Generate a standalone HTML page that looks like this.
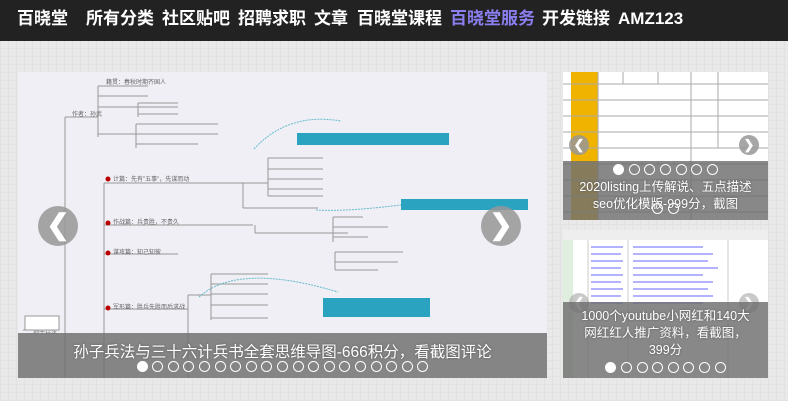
<!DOCTYPE html>
<html><head><meta charset="utf-8"><style>
*{margin:0;padding:0;box-sizing:border-box}
body{width:788px;height:401px;overflow:hidden;background:#e9e9e9;background-image:linear-gradient(#e2e2e2 1px,transparent 1px),linear-gradient(90deg,#e2e2e2 1px,transparent 1px);background-size:8px 8px;font-family:"Liberation Sans","Noto Sans CJK SC",sans-serif;position:relative}
.nav{height:41px;background:#222;color:#fff;font-weight:bold;font-size:17px;white-space:nowrap;position:relative}
.nav span{position:absolute;top:0;line-height:38px;height:41px}
.slide{position:absolute;overflow:hidden}
.cap{position:absolute;left:0;right:0;background:rgba(110,110,110,.82);color:#fff;text-align:center;text-shadow:0 0 2px #555}
.dots{position:absolute;left:0;right:0;text-align:center;font-size:0}
.dots i{display:inline-block;width:11px;height:11px;border:1.5px solid #fff;border-radius:50%;margin:0 2.3px}
.dots i.a{background:#fff}
.arr{position:absolute;border-radius:50%;background:rgba(150,150,150,.85);color:#fff;font-weight:bold;text-align:center}
</style></head><body>
<div class="nav">
<span style="left:17px">百晓堂</span>
<span style="left:86px">所有分类</span>
<span style="left:162px">社区贴吧</span>
<span style="left:238px">招聘求职</span>
<span style="left:314px">文章</span>
<span style="left:357px">百晓堂课程</span>
<span style="left:450px;color:#8b7ff0">百晓堂服务</span>
<span style="left:542px">开发链接</span>
<span style="left:618px">AMZ123</span>
</div>

<div class="slide" style="left:18px;top:72px;width:529px;height:306px;background:#f0eff5">
<svg width="529" height="306" style="position:absolute;left:0;top:0" stroke="#999" fill="none" stroke-width="1">
<path d="M47 45V306M47 45H80M80 14V65M80 14H130M80 24H130M80 35H160M80 62H180M120 31V45M120 31H160M120 42H160M118 52V76M118 52H200M118 62H200M118 72H180M86 111V306M86 111H225M86 153H235M86 182H160M86 237H170M225 111V136M225 111H250M225 136H300M250 86V124M250 86H305M250 97H305M250 107H305M250 117H305M250 124H305M237 153V161M237 161H330M315 145V170M315 145H345M315 155H370M315 165H350M317 180V198M317 180H385M317 190H380M317 198H360M170 223V306M170 223H193M193 202V248M193 202H250M193 212H250M193 222H250M193 233H250M193 246H250M5 258H40"/>
<g fill="#666" stroke="none" font-size="6"><text x="88" y="12">籍贯：春秋时期齐国人</text><text x="54" y="44">作者：孙武</text><text x="95" y="109">计篇：先有"五事"，先谋而动</text><text x="95" y="152">作战篇：兵贵胜，不贵久</text><text x="95" y="182">谋攻篇：知己知彼</text><text x="95" y="237">军形篇：胜兵先胜而后求战</text><text x="15" y="262">孙子兵法</text></g>
<g fill="#b00" stroke="none"><circle cx="90" cy="107" r="2.5"/><circle cx="90" cy="151" r="2.5"/><circle cx="90" cy="181" r="2.5"/><circle cx="90" cy="236" r="2.5"/></g>
<path d="M236 77Q270 40 323 49M298 138Q330 140 390 132M181 225Q220 190 320 220" stroke="#6bc" stroke-dasharray="2 1"/>
<rect x="279" y="61" width="152" height="12" fill="#2aa3c0" stroke="none"/>
<rect x="383" y="127" width="127" height="11" fill="#2aa3c0" stroke="none"/>
<rect x="305" y="226" width="107" height="19" fill="#2aa3c0" stroke="none"/>
<rect x="7" y="244" width="34" height="14" fill="#fff" stroke="#999"/>
</svg>
<div class="arr" style="left:20px;top:134px;width:40px;height:40px;font-size:28px;line-height:38px">&#10094;</div>
<div class="arr" style="left:463px;top:134px;width:40px;height:40px;font-size:28px;line-height:38px">&#10095;</div>
<div class="cap" style="top:261px;height:45px;font-size:15.5px;padding-top:7px">孙子兵法与三十六计兵书全套思维导图-666积分，看截图评论</div>
<div class="dots" style="top:289px;left:0"><i class="a"></i><i></i><i></i><i></i><i></i><i></i><i></i><i></i><i></i><i></i><i></i><i></i><i></i><i></i><i></i><i></i><i></i><i></i><i></i></div>
</div>

<div class="slide" style="left:563px;top:72px;width:205px;height:148px;background:#fff">
<svg width="205" height="148" style="position:absolute" stroke="#aaa" fill="none">
<rect x="8" y="0" width="27" height="148" fill="#f0b400" stroke="none"/>
<path d="M0 12H205M0 28H205M0 44H205M0 60H205M0 76H205M0 92H205M0 108H205M0 124H205M0 140H205M35 0V148M128 0V148M60 0V12M95 0V12M155 0V76"/>
</svg>
<div class="arr" style="left:6px;top:63px;width:20px;height:20px;font-size:13px;line-height:20px">&#10094;</div>
<div class="arr" style="left:176px;top:63px;width:20px;height:20px;font-size:13px;line-height:20px">&#10095;</div>
<div class="cap" style="top:89px;height:59px;font-size:12.5px;line-height:17px;padding-top:18px">2020listing上传解说、五点描述<br>seo优化模版-999分，截图</div>
<div class="dots" style="top:92px"><i class="a"></i><i></i><i></i><i></i><i></i><i></i><i></i></div>
<div class="dots" style="top:131px"><i></i><i></i></div>
</div>

<div class="slide" style="left:563px;top:230px;width:205px;height:148px;background:#fff">
<svg width="205" height="148" style="position:absolute" stroke="#ccc" fill="none">
<rect x="0" y="0" width="205" height="10" fill="#eee" stroke="none"/>
<rect x="0" y="10" width="10" height="138" fill="#e0eee0" stroke="none"/>
<path d="M25 10V148M65 10V148M165 10V148"/>
<g stroke="#66f"><path d="M28 17H60M70 17H140M28 24H58M70 24H150M28 31H60M70 31H145M28 38H58M70 38H155M28 45H60M70 45H140M28 52H58M70 52H150M28 59H60M70 59H145M28 66H58M70 66H150M28 73H60M70 73H140"/></g>
</svg>
<div class="arr" style="left:6px;top:63px;width:20px;height:20px;font-size:13px;line-height:20px;opacity:.6">&#10094;</div>
<div class="arr" style="left:176px;top:63px;width:20px;height:20px;font-size:13px;line-height:20px;opacity:.6">&#10095;</div>
<div class="cap" style="top:72px;height:76px;font-size:12.5px;line-height:17px;padding-top:6px">1000个youtube小网红和140大<br>网红红人推广资料，看截图，<br>399分</div>
<div class="dots" style="top:132px"><i class="a"></i><i></i><i></i><i></i><i></i><i></i><i></i><i></i></div>
</div>
</body></html>
